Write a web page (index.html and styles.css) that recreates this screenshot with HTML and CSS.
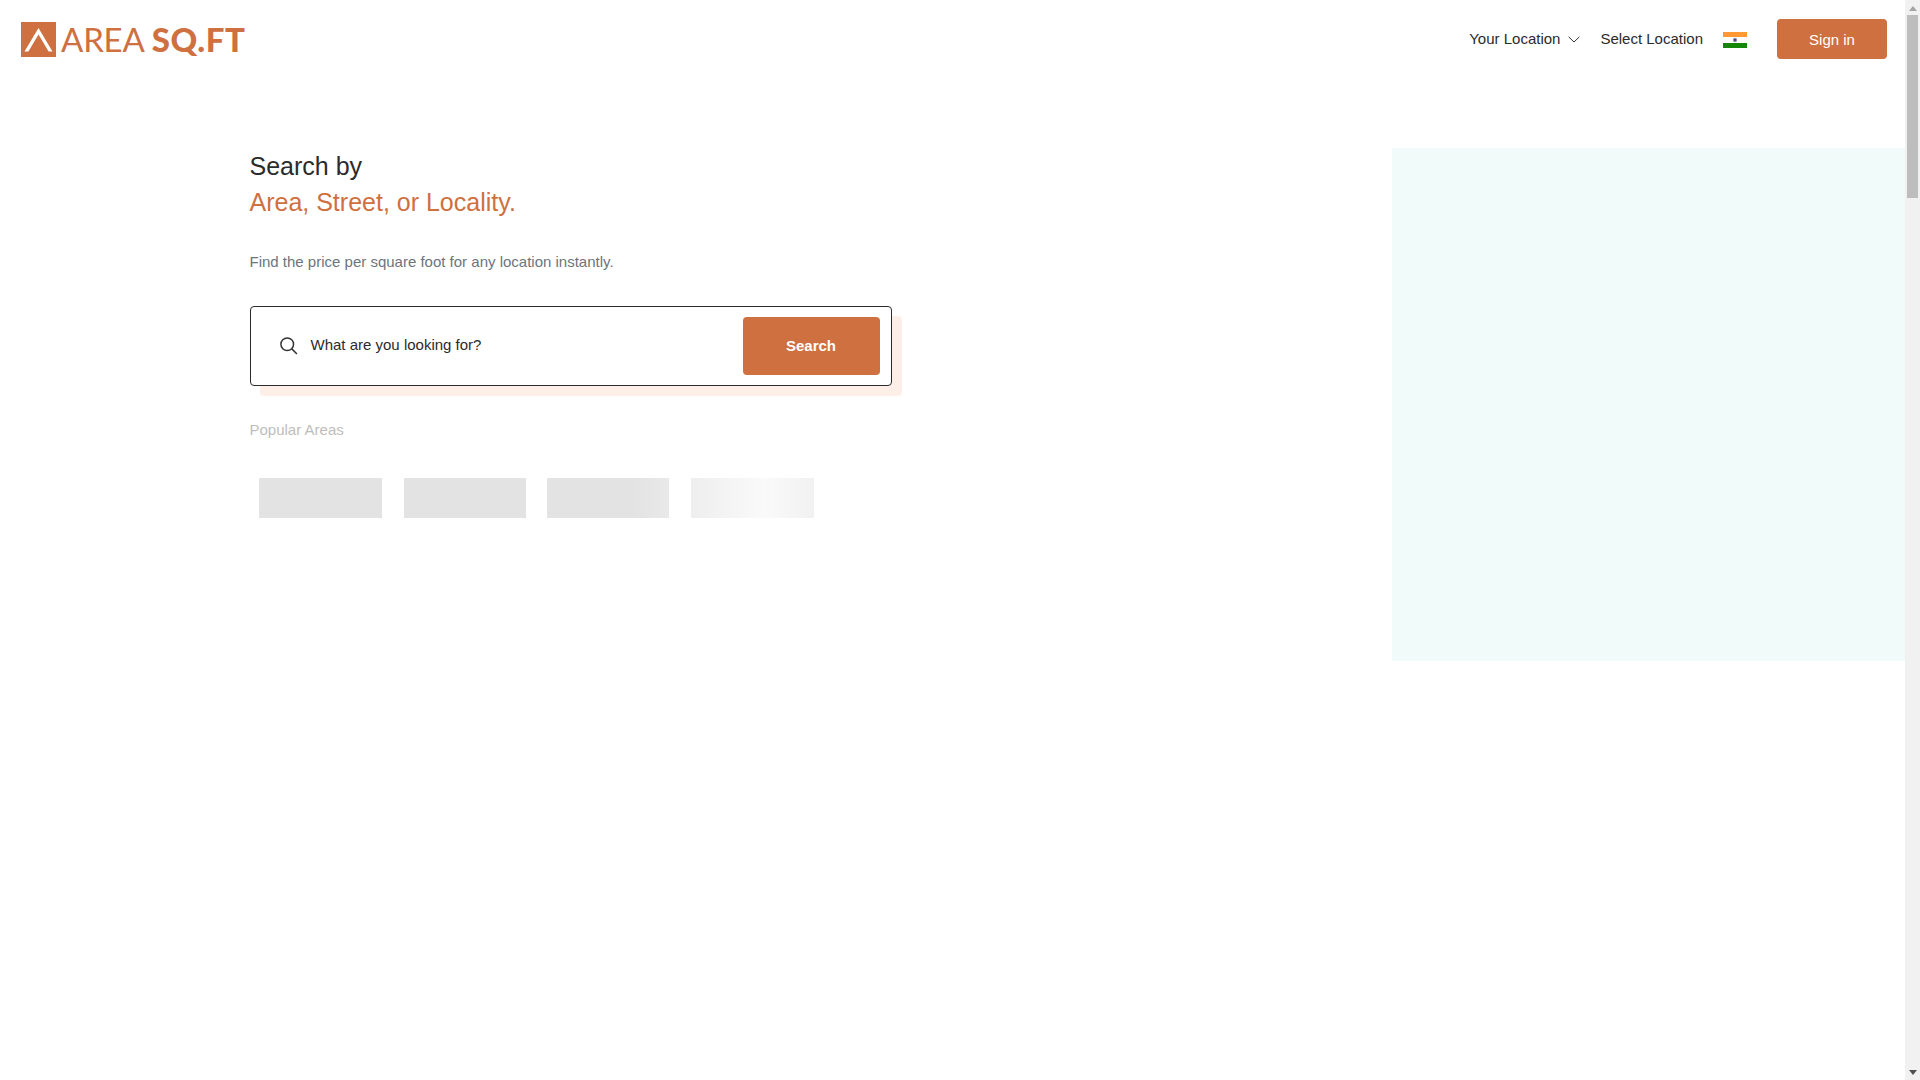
FILE: index.html
```html
<!DOCTYPE html>
<html lang="en">
<head>
    <meta charset="UTF-8">
    <meta name="viewport" content="width=device-width, initial-scale=1.0">
    <title>Area Sq.Ft</title>
    <link rel="stylesheet" href="styles.css">
</head>
<body>
<div class="page">
    <header class="topbar">
        <a class="brand" href="#">
            <svg class="brand-mark" viewBox="0 0 35 35" width="35" height="35">
                <rect width="35" height="35" fill="#cf7040"/>
                <path d="M3.5 29.5 L17.5 6 L31.5 29.5 L27.6 29.5 L17.5 12.6 L7.4 29.5 Z" fill="#fff"/>
            </svg>
            <span class="brand-name">AREA</span>
            <span class="brand-unit">SQ.FT</span>
        </a>
        <nav class="nav">
            <a class="nav-link your-location" href="#">Your Location
                <svg class="chevron" viewBox="0 0 12 7" width="12" height="7">
                    <path d="M.6.8 6 6 11.4.8" fill="none" stroke="#333" stroke-width="1"/>
                </svg>
            </a>
            <a class="nav-link" href="#">Select Location</a>
            <svg class="flag" viewBox="0 0 24 18" width="24" height="18">
                <rect y="1" width="24" height="5" fill="#ff9933"/>
                <rect y="6" width="24" height="6" fill="#fff"/>
                <rect y="12" width="24" height="5" fill="#138808"/>
                <circle cx="12" cy="9" r="2.2" fill="#8f8fb8"/>
                <circle cx="12" cy="9" r="1" fill="#33337f"/>
            </svg>
            <button class="signin">Sign in</button>
        </nav>
    </header>

    <main class="content">
        <section class="search-col">
            <h1 class="title">Search by<br><span class="accent">Area, Street, or Locality.</span></h1>
            <p class="subtitle">Find the price per square foot for any location instantly.</p>

            <div class="search-box">
                <svg class="search-icon" viewBox="0 0 18 18" width="19" height="19">
                    <circle cx="7.8" cy="7.8" r="6" fill="none" stroke="#333" stroke-width="1.4"/>
                    <path d="M12.2 12.2 17 17" stroke="#333" stroke-width="1.4"/>
                </svg>
                <span class="search-text">What are you looking for?</span>
                <button class="search-btn">Search</button>
            </div>

            <p class="popular">Popular Areas</p>
            <div class="skeletons">
                <div class="skeleton"></div>
                <div class="skeleton"></div>
                <div class="skeleton fade"></div>
                <div class="skeleton shine"></div>
            </div>
        </section>
        <aside class="side-panel"></aside>
    </main>
</div>

<div class="scrollbar">
    <span class="arrow up"></span>
    <div class="thumb"></div>
    <span class="arrow down"></span>
</div>
</body>
</html>
```

FILE: styles.css
```css
html, body {
    height: 100%;
    margin: 0;
}
body {
    font-family: "Liberation Sans", Arial, sans-serif;
    background-color: #fff;
    color: #2b2b2b;
    display: flex;
    overflow: hidden;
}
a {
    color: inherit;
    text-decoration: none;
}
button {
    font-family: inherit;
    border: none;
    cursor: pointer;
}

.page {
    flex-grow: 1;
    min-width: 0;
}

/* top bar */
.topbar {
    display: flex;
    align-items: center;
    justify-content: space-between;
    height: 78px;
    padding: 0 18px 0 21px;
}
.brand {
    display: flex;
    align-items: center;
    color: #cf7040;
    font-family: Lato, sans-serif;
    font-size: 33px;
    line-height: 36px;
}
.brand-mark {
    margin-right: 5px;
}
.brand-name {
    font-weight: 400;
    letter-spacing: -0.2px;
}
.brand-unit {
    font-weight: 900;
    letter-spacing: 0.6px;
    margin-left: 7px;
}
.nav {
    display: flex;
    align-items: center;
    font-size: 15px;
}
.nav-link {
    margin-right: 20px;
    position: relative;
    top: -1px;
}
.your-location {
    display: flex;
    align-items: center;
    gap: 8px;
}
.chevron {
    margin-top: 3px;
}
.flag {
    margin: 1px 30px 0 0;
}
.signin {
    width: 110px;
    height: 40px;
    background-color: #cf7040;
    color: #fff;
    font-size: 15px;
    border-radius: 4px;
}

/* main area */
.content {
    display: flex;
    justify-content: space-between;
    padding: 70px 0 0 249.5px;
}
.search-col {
    width: 642px;
}
.title {
    margin: 0;
    font-size: 25px;
    font-weight: 400;
    line-height: 36.2px;
}
.accent {
    color: #cf7040;
}
.subtitle {
    margin: 31px 0 0;
    font-size: 15px;
    line-height: 22px;
    color: #6c757d;
}
.search-box {
    display: flex;
    align-items: center;
    box-sizing: border-box;
    height: 80px;
    margin-top: 33px;
    padding: 0 11px 0 28px;
    background-color: #fff;
    border: 1px solid #2b2b2b;
    border-radius: 4px;
    box-shadow: 10px 10px 0 #fdeee8;
}
.search-icon {
    flex-shrink: 0;
    margin-top: -2px;
}
.search-text {
    flex-grow: 1;
    margin-left: 13px;
    font-size: 15px;
    position: relative;
    top: -2px;
}
.search-btn {
    width: 137px;
    height: 58px;
    padding-bottom: 3px;
    background-color: #cf7040;
    color: #fff;
    font-size: 15px;
    font-weight: 700;
    border-radius: 4px;
}
.popular {
    margin: 35px 0 0;
    font-size: 15px;
    line-height: 18px;
    color: #bdbdbd;
}
.skeletons {
    display: flex;
    gap: 22px;
    margin: 39px 0 0 9.5px;
}
.skeleton {
    width: 122.5px;
    height: 40px;
    background-color: #e3e3e3;
}
.skeleton.fade {
    margin-left: -1.5px;
    background: linear-gradient(90deg, #e3e3e3 70%, #e9e9e9 100%);
}
.skeleton.shine {
    background: linear-gradient(90deg, #eeeeee 0%, #fafafa 60%, #f1f1f1 100%);
}
.side-panel {
    width: 513.5px;
    height: 513px;
    background-color: #f1fbf9;
}

/* browser scrollbar */
.scrollbar {
    flex-shrink: 0;
    width: 15px;
    height: 100%;
    background-color: #f1f1f1;
    display: flex;
    flex-direction: column;
    align-items: center;
}
.thumb {
    width: 11px;
    height: 183px;
    background-color: #bdbdbd;
    margin-bottom: auto;
}
.arrow {
    width: 0;
    height: 0;
    border-left: 4px solid transparent;
    border-right: 4px solid transparent;
}
.arrow.up {
    margin: 6px 0 4px;
    border-bottom: 5px solid #a3a3a3;
}
.arrow.down {
    border-top: 5px solid #505050;
    margin-bottom: 5px;
}
```
